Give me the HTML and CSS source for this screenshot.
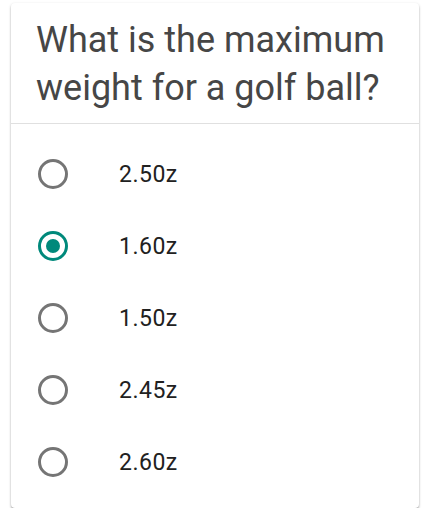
FILE: index.html
```html
<!DOCTYPE html>
<html>
<head>
<meta charset="utf-8">
<link rel="stylesheet" href="styles.css">
</head>
<body>
<div class="card">
  <div class="question">What is the maximum weight for a golf ball?</div>
  <div class="options">
    <div class="option"><span class="radio"></span><span class="label">2.50z</span></div>
    <div class="option"><span class="radio checked"></span><span class="label">1.60z</span></div>
    <div class="option"><span class="radio"></span><span class="label">1.50z</span></div>
    <div class="option"><span class="radio"></span><span class="label">2.45z</span></div>
    <div class="option"><span class="radio"></span><span class="label">2.60z</span></div>
  </div>
</div>
</body>
</html>
```
FILE: styles.css
```css
html, body { margin: 0; padding: 0; background: #fff; }
body { font-family: Roboto, "Noto Sans", sans-serif; padding: 3px 5px 0 11px; }
.card {
  width: 408px;
  height: 505px;
  background: #fff;
  border-radius: 4px;
  box-shadow: 0 1px 3px rgba(0,0,0,0.18), 0 2px 2px rgba(0,0,0,0.2), 0 2px 1px -1px rgba(0,0,0,0.12);
  box-sizing: border-box;
  overflow: hidden;
}
.question {
  font-size: 36px;
  line-height: 48px;
  color: #464646;
  padding: 13px 20px 11px 25px;
  border-bottom: 1px solid #e0e0e0;
}
.options { padding: 14px 0 10px; }
.option {
  height: 72px;
  display: flex;
  align-items: center;
  padding-left: 27px;
}
.radio {
  width: 30px;
  height: 30px;
  box-sizing: border-box;
  border: 3px solid #757575;
  border-radius: 50%;
  display: flex;
  align-items: center;
  justify-content: center;
  flex: none;
}
.radio.checked { border-color: #00897b; }
.radio.checked::after {
  content: "";
  width: 14px;
  height: 14px;
  border-radius: 50%;
  background: #00897b;
}
.label {
  margin-left: 51px;
  font-size: 23px;
  letter-spacing: 0.5px;
  color: #212121;
}
```
